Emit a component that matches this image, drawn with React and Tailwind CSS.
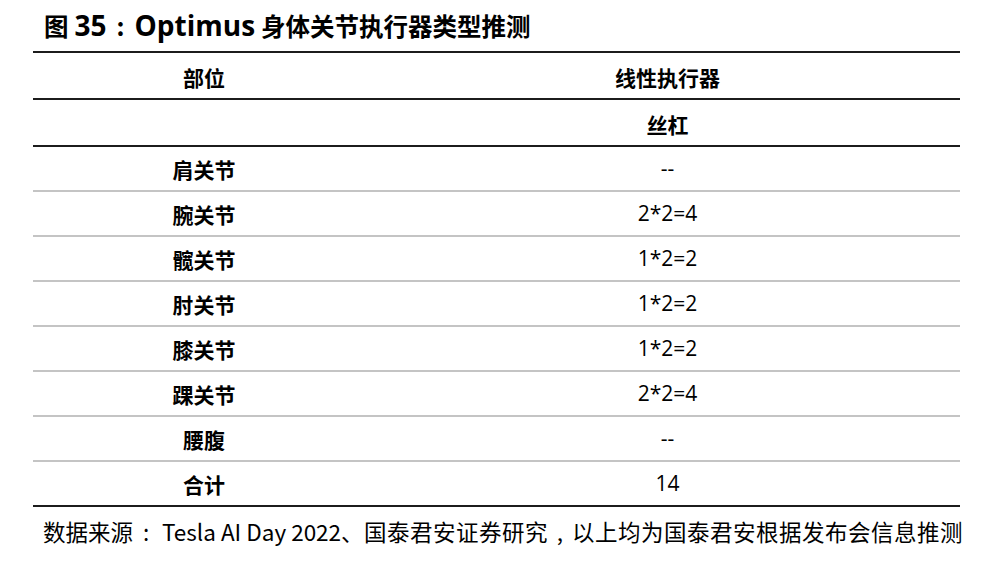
import React from 'react';

const rows = [
    { part: '肩关节', value: '--' },
    { part: '腕关节', value: '2*2=4' },
    { part: '髋关节', value: '1*2=2' },
    { part: '肘关节', value: '1*2=2' },
    { part: '膝关节', value: '1*2=2' },
    { part: '踝关节', value: '2*2=4' },
    { part: '腰腹', value: '--' },
    { part: '合计', value: '14' },
];

// Latin runs are set a bit larger, like YaHei does
const Latin = ({ children, className = '' }) => (
    <span className={`font-['Open_Sans',_sans-serif] ${className}`}>{children}</span>
);

const Punct = ({ children, w }) => (
    <span className={`inline-block text-center ${w}`}>{children}</span>
);

const App = () => {
    return (
        <div className="w-[1000px] h-[573px] bg-white text-black font-['Noto_Sans_CJK_SC',_'Noto_Sans',_sans-serif]">
            {/* Title */}
            <div className="h-[51px] pl-[44px] pt-[7px] text-[24.5px] font-bold leading-[36px] whitespace-nowrap">
                图<Latin className="text-[28px] ml-[6px]">35</Latin>
                <Punct w="w-[28px]">:</Punct>
                <Latin className="text-[28px] mr-[6px]">Optimus</Latin>身体关节执行器类型推测
            </div>

            {/* Table */}
            <div className="ml-[33px] w-[927px] border-t-2 border-[#1c1c1c]">
                <div className="grid grid-cols-[342px_1fr] h-[47px] pt-[4px] border-b-2 border-[#1c1c1c] items-center text-[21px] font-bold">
                    <div className="text-center">部位</div>
                    <div className="text-center">线性执行器</div>
                </div>
                <div className="grid grid-cols-[342px_1fr] h-[47px] pt-[4px] border-b-2 border-[#1c1c1c] items-center text-[21px] font-bold">
                    <div></div>
                    <div className="text-center">丝杠</div>
                </div>
                {rows.map((row, i) => (
                    <div
                        key={row.part}
                        className={`grid grid-cols-[342px_1fr] h-[45px] border-b-2 items-center ${i === rows.length - 1 ? 'border-[#1c1c1c]' : 'border-[#c4c4c4]'}`}
                    >
                        <div className="text-center font-bold text-[21px] pt-[3px]">{row.part}</div>
                        <div className="text-center text-[21px] font-['Open_Sans',_sans-serif]">{row.value}</div>
                    </div>
                ))}
            </div>

            {/* Source */}
            <div className="pl-[43px] pt-[9px] text-[22.5px] leading-[30px] whitespace-nowrap">
                数据来源<Punct w="w-[26px]">:</Punct>
                <span className="ml-[3px]">Tesla AI Day 2022</span>
                <span className="tracking-[0.5px]">、国泰君安证券研究<Punct w="w-[24px]">,</Punct>以上均为国泰君安根据发布会信息推测</span>
            </div>
        </div>
    );
};

export default App;
